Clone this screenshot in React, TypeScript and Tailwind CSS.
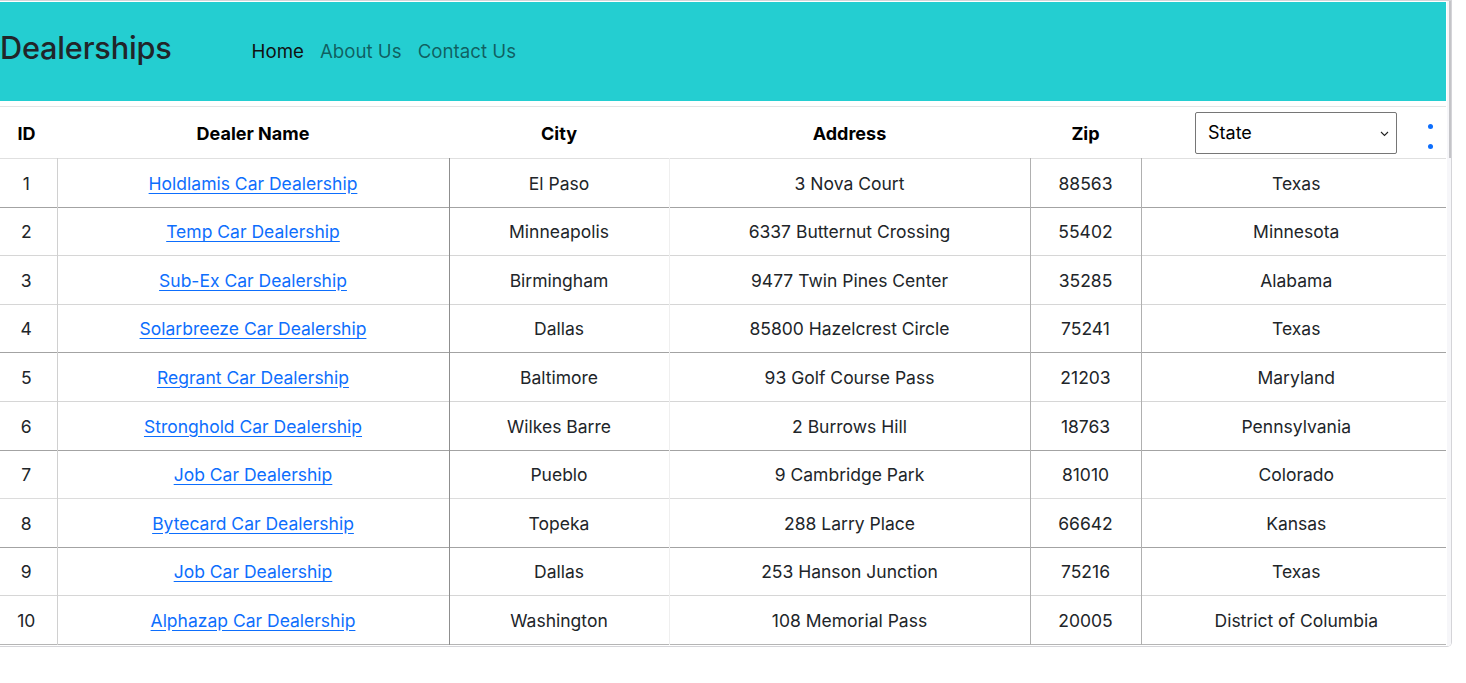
import React from "react";

type Row = { id: number; name: string; city: string; address: string; zip: string; state: string };

const rows: Row[] = [
  { id: 1, name: "Holdlamis Car Dealership", city: "El Paso", address: "3 Nova Court", zip: "88563", state: "Texas" },
  { id: 2, name: "Temp Car Dealership", city: "Minneapolis", address: "6337 Butternut Crossing", zip: "55402", state: "Minnesota" },
  { id: 3, name: "Sub-Ex Car Dealership", city: "Birmingham", address: "9477 Twin Pines Center", zip: "35285", state: "Alabama" },
  { id: 4, name: "Solarbreeze Car Dealership", city: "Dallas", address: "85800 Hazelcrest Circle", zip: "75241", state: "Texas" },
  { id: 5, name: "Regrant Car Dealership", city: "Baltimore", address: "93 Golf Course Pass", zip: "21203", state: "Maryland" },
  { id: 6, name: "Stronghold Car Dealership", city: "Wilkes Barre", address: "2 Burrows Hill", zip: "18763", state: "Pennsylvania" },
  { id: 7, name: "Job Car Dealership", city: "Pueblo", address: "9 Cambridge Park", zip: "81010", state: "Colorado" },
  { id: 8, name: "Bytecard Car Dealership", city: "Topeka", address: "288 Larry Place", zip: "66642", state: "Kansas" },
  { id: 9, name: "Job Car Dealership", city: "Dallas", address: "253 Hanson Junction", zip: "75216", state: "Texas" },
  { id: 10, name: "Alphazap Car Dealership", city: "Washington", address: "108 Memorial Pass", zip: "20005", state: "District of Columbia" },
];

const rowBorder = [
  "border-b-[#a3a3a3]",
  "border-b-[#d6d6d6]",
  "border-b-[#d6d6d6]",
  "border-b-[#a3a3a3]",
  "border-b-[#d6d6d6]",
  "border-b-[#a3a3a3]",
  "border-b-[#dcdcdc]",
  "border-b-[#a3a3a3]",
  "border-b-[#d6d6d6]",
  "border-b-[#b5b5b5]",
];

export default function App() {
  const font = { fontFamily: "Inter, 'Noto Sans', 'Liberation Sans', sans-serif" };
  return (
    <div className="w-[1466px] h-[683px] bg-white overflow-hidden" style={font}>
      <div className="w-[1452px] h-[647px] flex border-t border-r border-b border-[#d4d4d8] rounded-br-[5px] overflow-hidden">
        <div className="w-[1446px] flex flex-col">
          <nav className="mt-[1px] h-[99px] bg-[#24ced1] flex items-center">
            <h1 className="text-[30.7px] leading-none text-[#212529] font-medium tracking-[-0.2px] -mt-[6px]">Dealerships</h1>
            <div className="ml-[80px] mt-[2px] flex gap-[16px] text-[18.7px] leading-none">
              <a className="text-[#111]">Home</a>
              <a className="text-black/55">About Us</a>
              <a className="text-black/55">Contact Us</a>
            </div>
          </nav>
          <table className="mt-[5px] w-[1446px] table-fixed border-collapse text-[17.5px] text-[#212529]">
            <colgroup>
              <col className="w-[57px]" />
              <col className="w-[392px]" />
              <col className="w-[220px]" />
              <col className="w-[361px]" />
              <col className="w-[111px]" />
              <col className="w-[305px]" />
            </colgroup>
            <thead>
              <tr className="border-t border-t-[#e4e4e4] border-b border-b-[#e0e0e0]">
                <th className="h-[52px] text-[18px] font-bold text-black text-center p-0 pt-[2px] pr-[4px]">ID</th>
                <th className="text-[18px] font-bold text-black text-center p-0 pt-[2px]">Dealer Name</th>
                <th className="text-[18px] font-bold text-black text-center p-0 pt-[2px]">City</th>
                <th className="text-[18px] font-bold text-black text-center p-0 pt-[2px]">Address</th>
                <th className="text-[18px] font-bold text-black text-center p-0 pt-[2px]">Zip</th>
                <th className="p-0 font-normal">
                  <div className="flex items-center pl-[54px]">
                    <div className="relative w-[202px] h-[42px] border border-[#767676] rounded-[2px] flex items-center pl-[12px] text-[18px] text-black">
                      State
                      <svg className="absolute right-[7px] top-[18px]" width="9" height="6" viewBox="0 0 9 6">
                        <path d="M1 1 L4.5 4.5 L8 1" fill="none" stroke="#222" strokeWidth="1.1" />
                      </svg>
                    </div>
                    <div className="ml-[31px] mt-[8px] flex flex-col gap-[15px]">
                      <span className="w-[5px] h-[5px] rounded-full bg-[#0d6efd]" />
                      <span className="w-[5px] h-[5px] rounded-full bg-[#0d6efd]" />
                    </div>
                  </div>
                </th>
              </tr>
            </thead>
            <tbody>
              {rows.map((r, i) => (
                <tr key={r.id} className={`border-b ${rowBorder[i]}`}>
                  <td className="h-[48.6px] p-0 pt-[2px] text-center pr-[4px]">{r.id}</td>
                  <td className="p-0 pt-[2px] text-center border-l border-l-[#d0d0d0]">
                    <a className="text-[#0d6efd] underline underline-offset-[3px]">{r.name}</a>
                  </td>
                  <td className="p-0 pt-[2px] text-center border-l border-l-[#8f8f8f]">{r.city}</td>
                  <td className="p-0 pt-[2px] text-center border-l border-l-[#efefef]">{r.address}</td>
                  <td className="p-0 pt-[2px] text-center border-l border-l-[#b0b0b0]">{r.zip}</td>
                  <td className="p-0 pt-[2px] pl-[5px] text-center border-l border-l-[#b0b0b0]">{r.state}</td>
                </tr>
              ))}
            </tbody>
          </table>
        </div>
        <div className="w-[5px] h-full flex bg-white">
          <div className="w-[1px]" />
          <div className="flex-1 bg-[#f6f6f9] flex justify-end">
            <div className="w-[2px] h-[157px] bg-[#c4c4c8]" />
          </div>
        </div>
      </div>
    </div>
  );
}
